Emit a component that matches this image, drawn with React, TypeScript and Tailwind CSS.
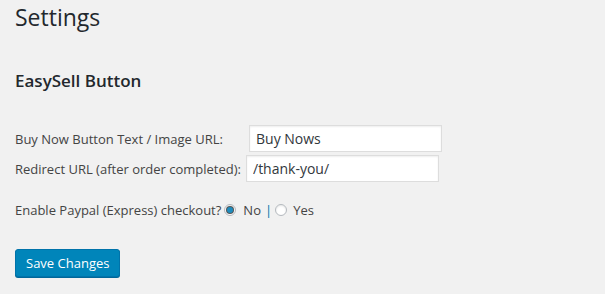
export default function App() {
  return (
    <div
      className="min-h-[294px] w-[605px] bg-[#f1f1f1] px-[15px] text-[13px] text-[#444]"
      style={{ fontFamily: '"Open Sans", sans-serif' }}
    >
      <h1 className="pt-[3px] text-[23px] leading-[29px] text-[#23282d]">Settings</h1>

      <h2 className="mt-[38px] text-[17px] font-semibold leading-[22px] text-[#23282d]">
        EasySell Button
      </h2>

      <div className="mt-[33px] flex flex-col gap-[3px]">
        <div className="flex items-center">
          <label className="w-[234px] leading-[26px]">Buy Now Button Text / Image URL:</label>
          <input
            type="text"
            defaultValue="Buy Nows"
            className="h-[27px] w-[193px] border border-[#ddd] bg-white px-[6px] text-[14px] text-[#32373c] shadow-[inset_0_1px_2px_rgba(0,0,0,0.07)] outline-none"
          />
        </div>
        <div className="flex items-center">
          <label className="w-[231px] leading-[26px]">Redirect URL (after order completed):</label>
          <input
            type="text"
            defaultValue="/thank-you/"
            className="h-[27px] w-[193px] border border-[#ddd] bg-white px-[6px] text-[14px] text-[#32373c] shadow-[inset_0_1px_2px_rgba(0,0,0,0.07)] outline-none"
          />
        </div>
      </div>

      <div className="mt-[18px] flex items-center leading-[20px]">
        <span>Enable Paypal (Express) checkout?</span>
        <span className="ml-[3px] flex h-[12px] w-[12px] items-center justify-center rounded-full border border-[#b4b9be] bg-white shadow-[inset_0_1px_2px_rgba(0,0,0,0.1)]">
          <span className="h-[6px] w-[6px] rounded-full bg-[#1e8cbe] shadow-[0_0_0_1px_#555]" />
        </span>
        <span className="ml-[7px]">No</span>
        <span className="ml-[4px] text-[#0073aa]">|</span>
        <span className="ml-[3px] h-[12px] w-[12px] rounded-full border border-[#b4b9be] bg-white shadow-[inset_0_1px_2px_rgba(0,0,0,0.1)]" />
        <span className="ml-[6px]">Yes</span>
      </div>

      <button className="mt-[29px] h-[28px] rounded-[3px] border border-[#0073aa] bg-[#0085ba] px-[10px] text-[13px] leading-[26px] text-white shadow-[0_1px_0_#006799]">
        Save Changes
      </button>
    </div>
  );
}
